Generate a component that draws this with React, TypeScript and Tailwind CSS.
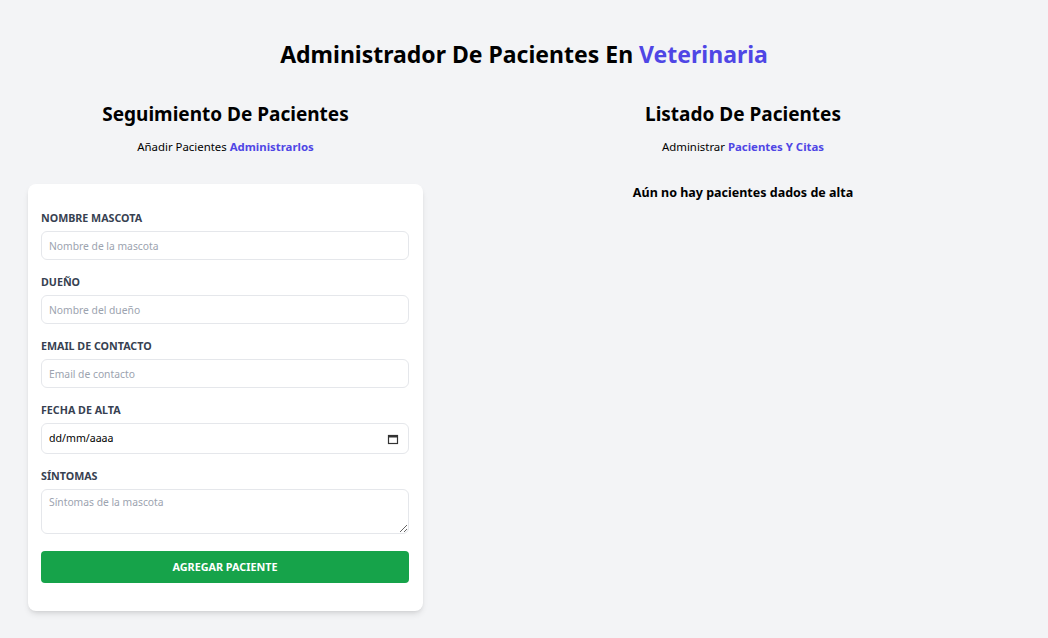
import React from "react";

const font = { fontFamily: '"Noto Sans", "Open Sans", sans-serif' };

function Field({ label, children }: { label: string; children: React.ReactNode }) {
  return (
    <div className="mb-[14px]">
      <label className="block text-[10.7px] font-bold uppercase text-[#374151] leading-[16px] mb-[5px]">{label}</label>
      {children}
    </div>
  );
}

const inputCls =
  "block w-full h-[29px] border border-[#e5e7eb] rounded-md px-[7px] text-[10.3px] placeholder-[#9ca3af] outline-none";

export default function App() {
  return (
    <div className="min-h-[638px] bg-[#f3f4f6] pt-[36px]" style={font}>
      <h1 className="text-center text-[23px] font-bold leading-[36px] text-black">
        Administrador De Pacientes En <span className="text-[#4f46e5]">Veterinaria</span>
      </h1>
      <div className="flex mt-[28px]">
        <div className="ml-[28px] w-[395px]">
          <h2 className="text-center text-[19px] font-bold leading-[28px] text-black">Seguimiento De Pacientes</h2>
          <p className="text-center text-[11.4px] leading-[18px] mt-[10px] text-black">
            Añadir Pacientes <span className="font-bold text-[#4f46e5]">Administrarlos</span>
          </p>
          <form className="mt-[28px] bg-white rounded-lg shadow-md pl-[13px] pr-[14px] pt-[26px] pb-[28px] w-[395px]">
            <Field label="Nombre Mascota">
              <input type="text" placeholder="Nombre de la mascota" className={inputCls} />
            </Field>
            <Field label="Dueño">
              <input type="text" placeholder="Nombre del dueño" className={inputCls} />
            </Field>
            <Field label="Email de contacto">
              <input type="email" placeholder="Email de contacto" className={inputCls} />
            </Field>
            <Field label="Fecha de alta">
              <div className="flex items-center justify-between w-full h-[31px] border border-[#e5e7eb] rounded-md pl-[7px] pr-[9px] text-[10.6px] text-black">
                <span>dd/mm/aaaa</span>
                <svg width="12" height="12" viewBox="0 0 12 12" aria-hidden="true">
                  <rect x="1.5" y="2.5" width="9" height="8" fill="none" stroke="#333" strokeWidth="1.2" />
                  <rect x="1" y="2" width="10" height="2.5" fill="#333" />
                </svg>
              </div>
            </Field>
            <Field label="Síntomas">
              <textarea
                placeholder="Síntomas de la mascota"
                className="block w-full h-[45px] border border-[#e5e7eb] rounded-md px-[7px] py-[5px] text-[10.3px] placeholder-[#9ca3af] outline-none"
              />
            </Field>
            <button
              type="button"
              className="block w-full h-[32px] mt-[17px] bg-[#16a34a] text-white text-[10.8px] font-bold uppercase rounded"
            >
              Agregar Paciente
            </button>
          </form>
        </div>
        <div className="flex-1 pl-[40px] pr-[25px]">
          <h2 className="text-center text-[19px] font-bold leading-[28px] text-black">Listado De Pacientes</h2>
          <p className="text-center text-[11.4px] leading-[18px] mt-[10px] text-black">
            Administrar <span className="font-bold text-[#4f46e5]">Pacientes Y Citas</span>
          </p>
          <p className="text-center text-[12.5px] font-bold leading-[20px] mt-[27px] text-black">
            Aún no hay pacientes dados de alta
          </p>
        </div>
      </div>
    </div>
  );
}
